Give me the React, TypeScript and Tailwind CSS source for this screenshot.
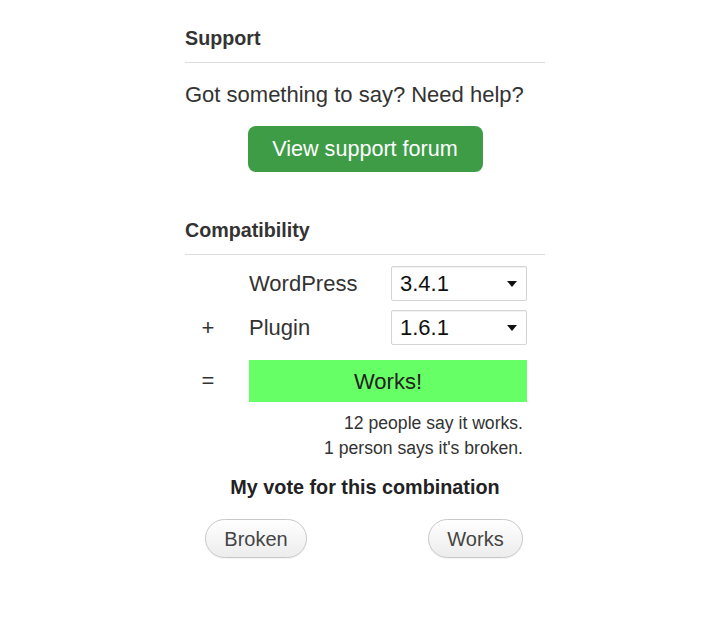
import React from "react";

function VersionSelect({ value }: { value: string }) {
  return (
    <div className="flex h-[35px] w-[136px] items-center justify-between rounded-[2px] border border-[#d4d4d4] bg-white pl-[8px] pr-[9px] text-[22px] text-[#111] shadow-[inset_0_1px_1px_rgba(0,0,0,0.06)]">
      <span>{value}</span>
      <svg width="10" height="6" viewBox="0 0 10 6">
        <path d="M0 0h10L5 6z" fill="#111" />
      </svg>
    </div>
  );
}

function VoteButton({ label, width }: { label: string; width: string }) {
  return (
    <button
      className={`h-[39px] ${width} rounded-full border border-[#c8c8c8] bg-gradient-to-b from-white to-[#ececec] text-[20px] text-[#444] shadow-[0_1px_1px_rgba(0,0,0,0.05)]`}
    >
      {label}
    </button>
  );
}

export default function App() {
  return (
    <div className="min-h-screen bg-white font-['Liberation_Sans',Arial,sans-serif] text-[#333]">
      <div className="ml-[185px] w-[360px] pt-[26px]">

        <h3 className="border-b border-[#ddd] pb-[12px] text-[19.7px] font-bold leading-[24px] text-[#333]">
          Support
        </h3>
        <p className="mt-[18px] text-[22px] leading-[28px] text-[#333]">
          Got something to say? Need help?
        </p>
        <div className="mt-[17px] flex justify-center">
          <button className="h-[46px] w-[235px] rounded-[8px] bg-[#3e9c46] text-[21.6px] text-white">
            View support forum
          </button>
        </div>

        <h3 className="mt-[46px] border-b border-[#ddd] pb-[12px] text-[19.7px] font-bold leading-[24px] text-[#333]">
          Compatibility
        </h3>

        <div className="mt-[11px] flex items-center">
          <span className="w-[46px] text-center text-[22px]"></span>
          <span className="ml-[18px] w-[142px] text-[22px] text-[#333]">WordPress</span>
          <VersionSelect value="3.4.1" />
        </div>
        <div className="mt-[9px] flex items-center">
          <span className="w-[46px] text-center text-[22px]">+</span>
          <span className="ml-[18px] w-[142px] text-[22px] text-[#333]">Plugin</span>
          <VersionSelect value="1.6.1" />
        </div>
        <div className="mt-[15px] flex items-center">
          <span className="w-[46px] text-center text-[22px] leading-[20px]">=</span>
          <div className="ml-[18px] flex h-[42px] w-[278px] items-center justify-center bg-[#66ff66] text-[22px] text-[#222]">
            Works!
          </div>
        </div>

        <div className="mt-[9px] pr-[22px] text-right text-[17.6px] leading-[25px] text-[#333]">
          <p>12 people say it works.</p>
          <p>1 person says it's broken.</p>
        </div>

        <h4 className="mt-[14px] text-center text-[19.8px] font-bold leading-[24px] text-[#222]">
          My vote for this combination
        </h4>
        <div className="mt-[20px] flex justify-between pl-[20px] pr-[22px]">
          <VoteButton label="Broken" width="w-[102px]" />
          <VoteButton label="Works" width="w-[95px]" />
        </div>

      </div>
    </div>
  );
}
